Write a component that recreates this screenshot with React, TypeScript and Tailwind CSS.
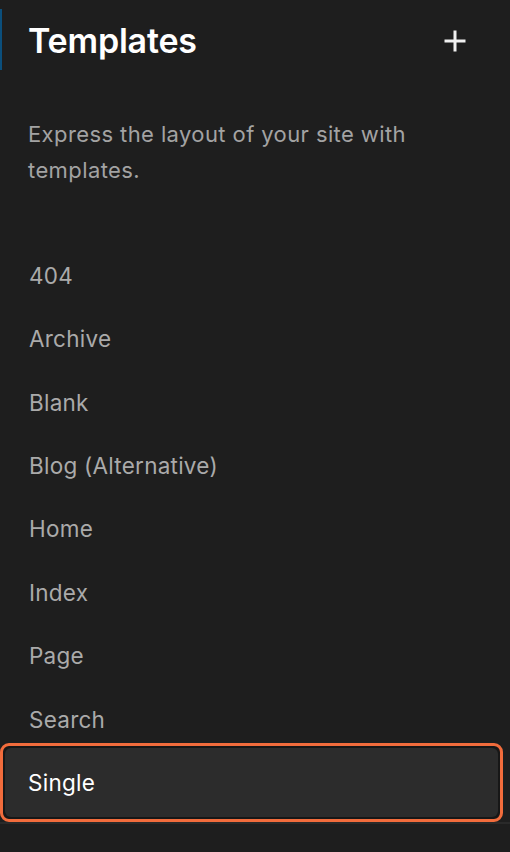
import React from "react";

const items = ["404", "Archive", "Blank", "Blog (Alternative)", "Home", "Index", "Page", "Search"];

export default function App() {
  return (
    <div
      className="w-[510px] h-[852px] bg-[#1e1e1e] overflow-hidden flex flex-col"
      style={{ fontFamily: "Inter, 'Noto Sans', sans-serif" }}
    >
      <div className="relative flex items-center justify-between pt-[21px] pl-[28px] pr-[43px]">
        <div className="absolute left-0 top-[9px] w-[2px] h-[61px] bg-[#0b4f7c]" />
        <h1 className="text-[34px] leading-[40px] font-semibold text-white tracking-[-0.2px]">Templates</h1>
        <svg width="24" height="24" viewBox="0 0 24 24" className="text-[#f0f0f0]">
          <path d="M12 1.5v21M1.5 12h21" stroke="currentColor" strokeWidth="3" />
        </svg>
      </div>
      <p className="mt-[55px] pl-[28px] pr-[40px] text-[22px] leading-[36px] tracking-[0.4px] text-[#a3a3a3]">
        Express the layout of your site with templates.
      </p>
      <div className="mt-[56px] flex flex-col">
        {items.map((t) => (
          <div key={t} className="h-[63.4px] flex items-center pl-[29px] text-[22.5px] tracking-[0.25px] text-[#aaaaaa]">
            {t}
          </div>
        ))}
        <div className="-my-[8px] mr-[7px] h-[79px] rounded-[9px] border-[3px] border-[#f26c3c] bg-[#171717] p-[2px]">
          <div className="h-full rounded-[6px] bg-[#2c2c2c] flex items-center pl-[23px] text-[22.5px] tracking-[0.25px] text-white">
            Single
          </div>
        </div>
      </div>
      <div className="mt-[8px] h-[2px] bg-[#2a2a2a]" />
    </div>
  );
}
